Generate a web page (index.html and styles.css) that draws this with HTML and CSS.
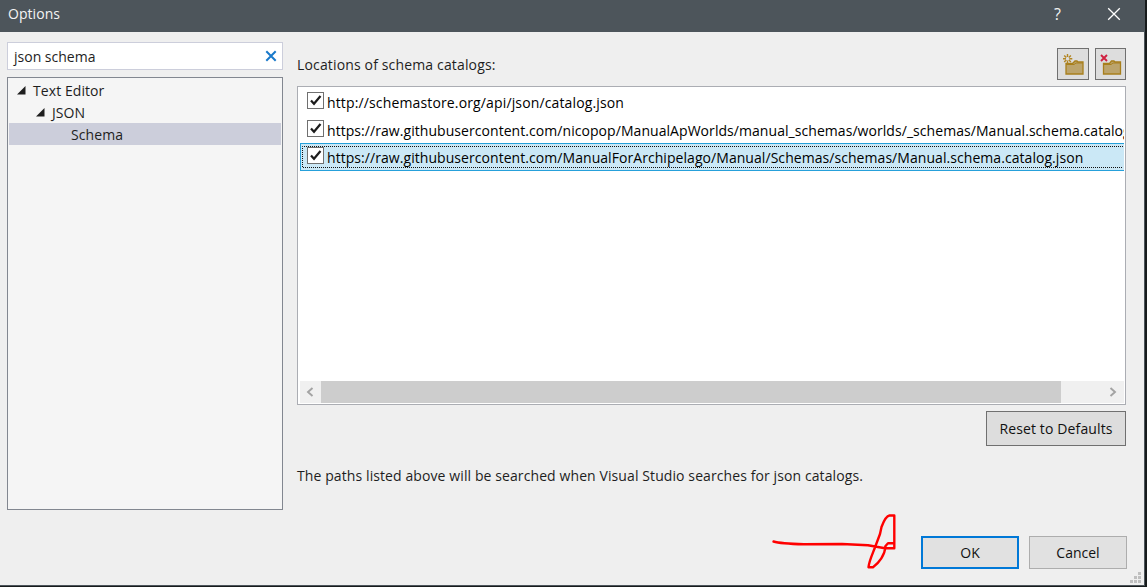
FILE: index.html
```html
<!DOCTYPE html>
<html lang="en">
<head>
<meta charset="utf-8">
<title>Options</title>
<link rel="stylesheet" href="styles.css">
</head>
<body>
<div class="dialog">
  <header class="titlebar">
    <span class="title">Options</span>
    <span class="help">?</span>
    <svg class="close" width="14" height="14" viewBox="0 0 14 14"><path d="M1.2 1.2 12.8 12.8M12.8 1.2 1.2 12.8"/></svg>
  </header>
  <div class="main">
    <aside class="sidebar">
      <div class="search">
        <span class="query">json schema</span>
        <svg width="12" height="12" viewBox="0 0 12 12"><path d="M1.3 1.3 10.7 10.7M10.7 1.3 1.3 10.7"/></svg>
      </div>
      <div class="tree">
        <div class="node level1"><svg width="9" height="9" viewBox="0 0 9 9"><path d="M8.5 0V8.5H0Z"/></svg><span class="name">Text Editor</span></div>
        <div class="node level2"><svg width="9" height="9" viewBox="0 0 9 9"><path d="M8.5 0V8.5H0Z"/></svg><span class="name">JSON</span></div>
        <div class="node level3 current"><span class="name">Schema</span></div>
      </div>
    </aside>
    <section class="content">
      <div class="heading">
        <span class="label">Locations of schema catalogs:</span>
        <button class="tool" aria-label="Add">
          <svg width="30" height="30" viewBox="0 0 30 30">
            <path class="folder" d="M8 14.5H14.5L17 12H19L20 13H25V25H8Z"/>
            <path class="fold-line" d="M8 15.5H16L18 14H25"/>
            <path class="spark" d="M9.5 5V8M9.5 11.5V14.5M5 9.7H8M11.3 9.7H14.3M6.2 6.4 8.3 8.5M12.9 6.4 10.8 8.5M6.2 13 8.3 10.9M12.9 13 10.8 10.9"/>
          </svg>
        </button>
        <button class="tool second" aria-label="Remove">
          <svg width="29" height="30" viewBox="0 0 29 30">
            <path class="folder" d="M7.5 14.5H13.5L15.5 12H18L19 13H24.5V25H7.5Z"/>
            <path class="fold-line" d="M7.5 15.5H15L17 14H24.5"/>
            <path class="cross" d="M5 6 11 12M11 6 5 12"/>
          </svg>
        </button>
      </div>
      <div class="list">
        <div class="row r1"><span class="check"><svg width="15" height="15" viewBox="0 0 15 15"><path d="M3 7.5 6 10.8 12.5 3"/></svg></span><span class="url u1">http://schemastore.org/api/json/catalog.json</span></div>
        <div class="row r2"><span class="check"><svg width="15" height="15" viewBox="0 0 15 15"><path d="M3 7.5 6 10.8 12.5 3"/></svg></span><span class="url">https://raw.githubusercontent.com/nicopop/ManualApWorlds/manual_schemas/worlds/_schemas/Manual.schema.catalog</span></div>
        <div class="row r3"><span class="check"><svg width="15" height="15" viewBox="0 0 15 15"><path d="M3 7.5 6 10.8 12.5 3"/></svg></span><span class="url">https://raw.githubusercontent.com/ManualForArchipelago/Manual/Schemas/schemas/Manual.schema.catalog.json</span>
          <svg class="focus" width="821" height="22"><path d="M821 .5H.5V21.5H821"/></svg>
        </div>
        <div class="scrollbar">
          <span class="arrow"><svg width="8" height="10" viewBox="0 0 8 10"><path d="M6.5 1 2 5 6.5 9"/></svg></span>
          <span class="thumb"></span>
          <span class="arrow right"><svg width="8" height="10" viewBox="0 0 8 10"><path d="M1.5 1 6 5 1.5 9"/></svg></span>
        </div>
      </div>
      <button class="reset"><span>Reset to Defaults</span></button>
      <p class="note"><span>The paths listed above will be searched when Visual Studio searches for json catalogs.</span></p>
    </section>
  </div>
  <footer class="footer">
    <button class="btn ok"><span>OK</span></button>
    <button class="btn"><span>Cancel</span></button>
  </footer>
  <svg class="scribble" width="130" height="62" viewBox="768 511 130 62"><path d="M773.5 541.5C780 543.5 794 544 804 544.3L842 544 868 545.2 885 548.2H894.3V515.5H889.5C886 516 883 523 881.5 527L880 534 875.5 546C873 553 869 561 868.5 567.2H873C879 563 885 555 885.5 546L888 543.3H893"/></svg>
  <svg class="grip" width="11" height="11" viewBox="0 0 11 11"><path d="M8 0h3v3h-3zM4 4h3v3h-3zM8 4h3v3h-3zM0 8h3v3h-3zM4 8h3v3h-3zM8 8h3v3h-3z"/></svg>
</div>
</body>
</html>
```
FILE: styles.css
```css
* { box-sizing: border-box; }
body {
  margin: 0;
  height: 587px;
  overflow: hidden;
  background: #171b1c;
  font: 14px/20px "Open Sans", "Noto Sans", sans-serif;
  color: #1e1e1e;
}
svg { display: block; flex: none; fill: none; }
button { font: inherit; color: #111; padding: 0; display: flex; align-items: center; justify-content: center; border-radius: 0; }
span { white-space: nowrap; }
.dialog {
  position: relative;
  width: 1145px;
  height: 586px;
  background: #efefef;
  border-right: 1px solid #4d555b;
  border-bottom: 1px solid #4d555b;
}
.titlebar { height: 32px; display: flex; align-items: center; padding: 0 23px 5px 8px; background: #4d555b; color: #f4f4f4; }
.title { margin-right: auto; letter-spacing: 0.05px; }
.help { font-size: 16px; margin-right: 46px; }
.close { stroke: #fff; stroke-width: 1.3; }
.main { display: flex; gap: 14px; padding: 10px 18px 0 7px; height: 494px; }
.sidebar { width: 276px; display: flex; flex-direction: column; gap: 7px; padding-bottom: 16px; }
.search { height: 28px; flex: none; display: flex; align-items: center; justify-content: space-between; padding: 0 5px 0 6px; border: 1px solid #cccedb; background: #fff; }
.query { padding-top: 2px; }
.search svg { stroke: #1979ca; stroke-width: 2; }
.tree { flex: 1; border: 1px solid #828790; padding: 1px; background: #f5f5f5; }
.node { height: 22px; display: flex; align-items: center; gap: 7px; }
.node svg { fill: #1e1e1e; }
.name { padding-top: 2px; letter-spacing: 0.08px; }
.level1 { padding-left: 8px; }
.level2 { padding-left: 27px; }
.level3 { padding-left: 62px; }
.current { background: #cccedb; }
.content { flex: 1; min-width: 0; display: flex; flex-direction: column; }
.heading { display: flex; height: 38px; padding-top: 6px; margin-bottom: 6px; }
.label { margin: 7px auto 0 0; letter-spacing: 0.15px; }
.tool { width: 32px; height: 32px; border: 1px solid #707070; background: #ddd; }
.tool.second { width: 31px; margin-left: 6px; }
.folder { fill: #bca46c; stroke: #a87f1c; stroke-width: 1.3; }
.fold-line { stroke: #a87f1c; stroke-width: 1; }
.spark { stroke: #b28522; stroke-width: 1.4; }
.cross { stroke: #d02040; stroke-width: 1.9; }
.list { height: 319px; flex: none; border: 1px solid #abadb3; background: #fff; padding: 1px 1px 1px 2px; display: flex; flex-direction: column; }
.row { position: relative; height: 28px; display: flex; align-items: flex-start; padding: 4px 0 0 7px; overflow: hidden; color: #000; }
.r2 { height: 27px; }
.r3 { background: #cbe8f6; border: 1px solid #26a0da; border-right: 0; padding: 3px 0 0 6px; }
.check { width: 17px; height: 17px; flex: none; border: 1px solid #707070; background: #fff; }
.check path { stroke: #1c1c1c; stroke-width: 2.2; }
.url { margin: 1px 0 0 3px; letter-spacing: 0.058px; }
.u1 { letter-spacing: 0.14px; }
.focus { position: absolute; left: 1px; top: 2px; stroke: #111; stroke-dasharray: 1 1; }
.scrollbar { margin-top: auto; height: 22px; display: flex; background: #f0f0f0; }
.arrow { width: 21px; display: flex; align-items: center; justify-content: center; padding-right: 2px; }
.arrow svg { stroke: #a3a3a3; stroke-width: 1.9; }
.arrow.right { margin-left: auto; }
.thumb { width: 740px; background: #cdcdcd; }
.reset { align-self: flex-end; margin-top: 6px; width: 140px; height: 35px; flex: none; border: 1px solid #707070; background: #ddd; letter-spacing: 0.13px; padding-top: 1px; }
.note { margin: 20px 0 0; letter-spacing: 0.097px; }
.footer { display: flex; justify-content: flex-end; gap: 10px; padding: 10px 17px 0 0; }
.btn { width: 98px; height: 33px; border: 1px solid #adadad; background: #e1e1e1; }
.btn.ok { border: 2px solid #0078d7; }
.scribble { position: absolute; left: 768px; top: 511px; stroke: #f00; stroke-width: 2.4; stroke-linecap: round; stroke-linejoin: round; }
.grip { position: absolute; right: 3px; bottom: 2px; fill: #bfbfbf; }
```
